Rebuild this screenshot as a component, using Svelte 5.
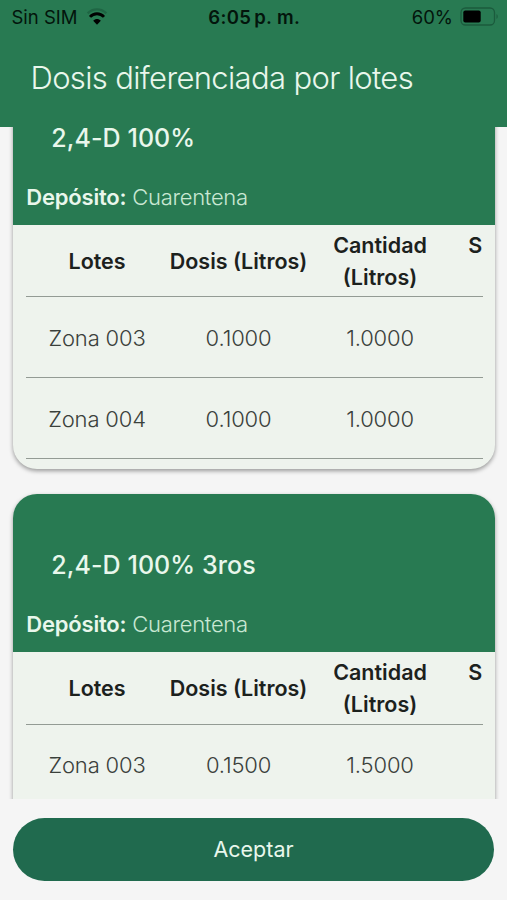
<script>
    const columns = ['Lotes', 'Dosis (Litros)', 'Cantidad (Litros)', 'S'];

    const products = [
        {
            name: '2,4-D 100%',
            deposit: 'Cuarentena',
            rows: [
                ['Zona 003', '0.1000', '1.0000', ''],
                ['Zona 004', '0.1000', '1.0000', ''],
            ],
        },
        {
            name: '2,4-D 100% 3ros',
            deposit: 'Cuarentena',
            rows: [
                ['Zona 003', '0.1500', '1.5000', ''],
            ],
        },
    ];
</script>

<div class="screen">
    <header>
        <div class="status">
            <div class="carrier">
                <span>Sin SIM</span>
                <svg width="22" height="18" viewBox="0 0 22 18">
                    <path d="M1.700 5.400C6.800 0 15.200 0 20.300 5.400" fill="none" stroke="#1f6644" stroke-width="2.400" />
                    <path d="M4 8.900C7.800 4.700 14.200 4.700 18 8.900" fill="none" stroke="#000" stroke-width="2.800" />
                    <path d="M7.200 12.700C9.300 10.300 12.700 10.300 14.800 12.700L11 16.700Z" fill="#000" />
                </svg>
            </div>
            <strong class="clock">6:05<span>p. m.</span></strong>
            <div class="battery">
                <span>60%</span>
                <svg width="39" height="20" viewBox="0 0 39 20">
                    <rect x="1" y="1" width="33.500" height="17" rx="4.500" fill="none" stroke="#1b5b3d" stroke-width="1.300" />
                    <rect x="3.300" y="3.500" width="17.400" height="12" rx="2" fill="#000" />
                    <path d="M36.500 7v5c1.600-.8 1.600-4.200 0-5z" fill="#1b5b3d" />
                </svg>
            </div>
        </div>
        <h1>Dosis diferenciada por lotes</h1>
    </header>

    <main>
        <div class="cards">
            {#each products as product}
                <section class="card">
                    <div class="card-head">
                        <h2>{product.name}</h2>
                        <p><b>Depósito:</b> <span>{product.deposit}</span></p>
                    </div>
                    <div class="table">
                        <div class="row titles">
                            {#each columns as column}
                                <div class="cell"><span>{column}</span></div>
                            {/each}
                        </div>
                        {#each product.rows as row}
                            <div class="row">
                                {#each row as value}
                                    <div class="cell"><span>{value}</span></div>
                                {/each}
                            </div>
                        {/each}
                    </div>
                </section>
            {/each}
        </div>
    </main>

    <footer>
        <button>Aceptar</button>
    </footer>
</div>

<style>
    :global(body) {
        margin: 0;
        background: #f5f5f5;
    }

    .screen {
        display: flex;
        flex-direction: column;
        height: 900px;
        overflow: hidden;
        background: #f5f5f5;
        font-family: Inter, "Liberation Sans", sans-serif;
    }

    header {
        flex: none;
        height: 127px;
        background: #287a52;
    }

    .status {
        display: grid;
        grid-template-columns: 1fr auto 1fr;
        align-items: center;
        height: 34px;
        padding: 0 8px 0 11.5px;
        color: #03150c;
        font-size: 18.5px;
    }

    .carrier,
    .battery {
        display: flex;
        align-items: center;
    }

    .carrier {
        gap: 8px;
    }

    .battery {
        justify-content: flex-end;
        gap: 7px;
    }

    .clock {
        margin-right: 2px;
        font-weight: 600;
        letter-spacing: 0.35px;
    }

    .clock span {
        margin-left: 3px;
    }

    h1 {
        margin: 24px 0 0 30.5px;
        color: #e9f7ec;
        font-size: 31px;
        font-weight: 350;
        line-height: 40px;
        letter-spacing: -0.65px;
        white-space: nowrap;
    }

    main {
        flex: none;
        height: 672px;
        overflow: hidden;
    }

    /* the list is scrolled, the first card starts above the visible area */
    .cards {
        display: flex;
        flex-direction: column;
        gap: 25px;
        margin-top: -60.5px;
        padding: 0 12.5px 0 13.3px;
    }

    .card {
        flex: none;
        overflow: hidden;
        border-radius: 24px;
        background: #eef3ed;
        box-shadow: 0 2px 4px rgba(0, 0, 0, 0.38);
    }

    .card:last-child {
        padding-bottom: 81px;
    }

    .card-head {
        box-sizing: border-box;
        height: 158.5px;
        padding: 55px 13px 0;
        background: #287a52;
        color: #e9f7ec;
    }

    h2 {
        margin: 0 0 0 25px;
        font-size: 25px;
        font-weight: 550;
        line-height: 32px;
        letter-spacing: 0.08px;
        white-space: nowrap;
    }

    p {
        margin: 27.5px 0 0;
        font-size: 22px;
        line-height: 32px;
        letter-spacing: -0.2px;
        white-space: nowrap;
    }

    p b {
        font-weight: 600;
    }

    p span {
        color: #c9e8d3;
        font-weight: 350;
        letter-spacing: -0.3px;
    }

    .table {
        margin: 0 12px 0 13px;
        padding-bottom: 9.5px;
        overflow: hidden;
    }

    .row {
        display: grid;
        grid-template-columns: repeat(4, 141.5px);
        box-sizing: border-box;
        height: 81px;
        padding-top: 1.5px;
        border-bottom: 1.5px solid #939b94;
        color: #3a403b;
        font-size: 22px;
        font-weight: 350;
        letter-spacing: -0.15px;
    }

    .titles {
        height: 72.3px;
        padding-top: 0;
        color: #1c211d;
        font-size: 21.5px;
        font-weight: 600;
        line-height: 32px;
        letter-spacing: 0;
    }

    .cell {
        display: flex;
        align-items: center;
        justify-content: center;
        text-align: center;
    }

    .titles .cell:last-child {
        align-items: flex-start;
        justify-content: flex-start;
        padding: 3.5px 0 0 17.5px;
    }

    footer {
        padding: 19px 13px;
    }

    button {
        display: block;
        width: 100%;
        height: 63px;
        padding: 0 0 1px;
        border: 0;
        border-radius: 32px;
        background: #206a4e;
        color: #e9f7ec;
        font-family: inherit;
        font-size: 21.5px;
    }
</style>
